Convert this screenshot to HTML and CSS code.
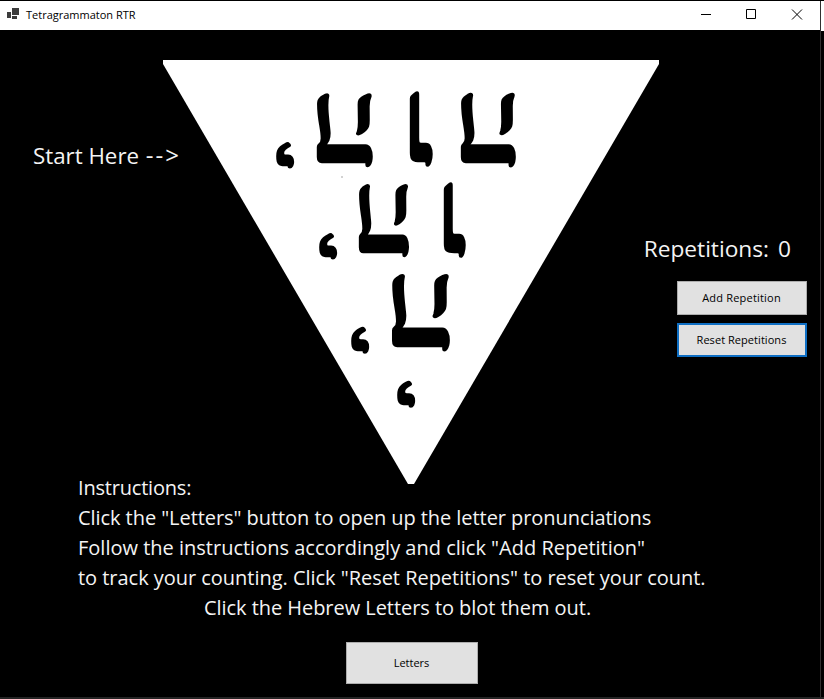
FILE: index.html
```html
<!DOCTYPE html>
<html lang="en">
<head>
<meta charset="utf-8">
<title>Tetragrammaton RTR</title>
<link rel="stylesheet" href="styles.css">
</head>
<body>
<div class="desktop">
  <div class="window">
    <header class="titlebar">
      <svg class="app-icon" width="12" height="12" viewBox="0 0 12 12" shape-rendering="crispEdges">
        <path fill="#3c3c3c" d="M5 0h7v7H5zM0 4h4v6H0zM5 8h5v3H5z"/>
      </svg>
      <span class="title">Tetragrammaton RTR</span>
      <div class="controls">
        <svg width="46" height="29" viewBox="0 0 46 29"><path d="M17 13.5h10"/></svg>
        <svg width="45" height="29" viewBox="0 0 45 29"><path d="M16.500 8.500h9v9h-9z"/></svg>
        <svg width="46" height="29" viewBox="0 0 46 29"><path d="M17 8.500l10 10M27 8.500l-10 10"/></svg>
      </div>
    </header>
    <main>
      <section class="board">
        <div class="start">Start Here <span class="arrow">--&gt;</span></div>
        <svg class="triangle" width="496" height="424" viewBox="163 60 496 424">
          <path fill="#fff" d="M163 60H659V64L414 484H408L163 64Z"/>
          <circle cx="342" cy="177" r=".8" fill="#999"/>
          <g class="letters">
            <text class="yod" transform="matrix(-.81 0 0 -.667 294.700 128)">י</text>
            <text transform="matrix(-1.184 0 0 -1.190 377.600 95.600)">ה</text>
            <text transform="matrix(-1.200 0 0 -1.226 433 93)">ו</text>
            <text transform="matrix(-1.163 0 0 -1.200 520.500 95.700)">ה</text>
            <text class="yod" transform="matrix(-.81 0 0 -.667 337.700 219)">י</text>
            <text transform="matrix(-1.061 0 0 -1.185 413.200 185.600)">ה</text>
            <text transform="matrix(-1.150 0 0 -1.226 466 184.200)">ו</text>
            <text class="yod" transform="matrix(-.81 0 0 -.69 369.700 311.600)">י</text>
            <text transform="matrix(-1.224 0 0 -1.250 454.700 276.500)">ה</text>
            <text class="yod" transform="matrix(-.81 0 0 -.69 415.700 365.600)">י</text>
          </g>
        </svg>
        <div class="counter">
          <div class="count"><span>Repetitions:</span><span>0</span></div>
          <button class="add">Add Repetition</button>
          <button class="reset">Reset Repetitions</button>
        </div>
      </section>
      <section class="instructions">
        <p class="heading">Instructions:</p>
        <p class="open">Click the "Letters" button to open up the letter pronunciations</p>
        <p>Follow the instructions accordingly and click "Add Repetition"</p>
        <p class="track">to track your counting. Click "Reset Repetitions" to reset your count.</p>
        <p class="blot">Click the Hebrew Letters to blot them out.</p>
      </section>
      <button class="open-letters">Letters</button>
    </main>
  </div>
  <div class="edge"></div>
</div>
</body>
</html>
```
FILE: styles.css
```css
* { box-sizing: border-box; }
body {
  margin: 0;
  background: #000;
  color: #f4f4f4;
  font-family: "Open Sans", "Noto Sans", sans-serif;
  overflow: hidden;
}
.desktop {
  display: flex;
  width: 824px;
  height: 699px;
  padding-top: 1px;
  border-bottom: 2px solid #242424;
}
.window {
  width: 821px;
  border-right: 1px solid #303030;
}
.edge { width: 3px; height: 30px; background: #fff; }
.titlebar {
  display: flex;
  align-items: center;
  height: 29px;
  padding-left: 7px;
  background: #fff;
  color: #000;
}
.app-icon { margin-bottom: 3px; }
.title { margin-left: 7px; padding-bottom: 2px; font-size: 11px; line-height: 27px; white-space: nowrap; }
.controls { display: flex; margin-left: auto; margin-right: -1px; }
.controls path { fill: none; stroke: #000; stroke-width: 1; }
.board {
  display: grid;
  grid-template-columns: 163px 496px 161px;
  height: 443px;
  padding-top: 30px;
}
.start {
  z-index: 1;
  margin: 79px 0 0 33px;
  font-size: 22.3px;
  line-height: 34px;
  white-space: nowrap;
}
.arrow { margin-left: 1px; font-size: 24px; line-height: 1; letter-spacing: 2px; }
.triangle { display: block; }
.letters text {
  font: 700 100px "Liberation Serif", serif;
  fill: #000;
  stroke: #000;
  stroke-width: 2px;
  stroke-linejoin: round;
}
.letters .yod { stroke-width: 3.5px; }
.counter {
  display: flex;
  flex-direction: column;
  align-items: flex-end;
  padding: 172px 13px 0 0;
}
.count {
  display: flex;
  gap: 9px;
  margin-right: 16px;
  font-size: 22.7px;
  line-height: 34px;
  white-space: nowrap;
}
button {
  width: 130px;
  height: 34px;
  padding: 0 1px 2px 0;
  border: 1px solid #adadad;
  border-radius: 0;
  background: #e1e1e1;
  color: #000;
  font: 11px "Open Sans", "Noto Sans", sans-serif;
}
.add { margin-top: 15px; letter-spacing: .2px; }
.reset { margin-top: 8px; border: 2px solid #0f6fc4; letter-spacing: .05px; }
.instructions { padding-left: 78px; font-size: 20px; line-height: 30px; white-space: nowrap; }
.instructions p { margin: 0; }
.instructions .heading { letter-spacing: -.2px; }
.instructions .open { letter-spacing: -.06px; }
.instructions .track { letter-spacing: -.03px; }
.instructions .blot { padding-left: 126px; letter-spacing: -.05px; }
.open-letters {
  display: block;
  width: 132px;
  height: 42px;
  margin: 19px 0 0 346px;
}
```
